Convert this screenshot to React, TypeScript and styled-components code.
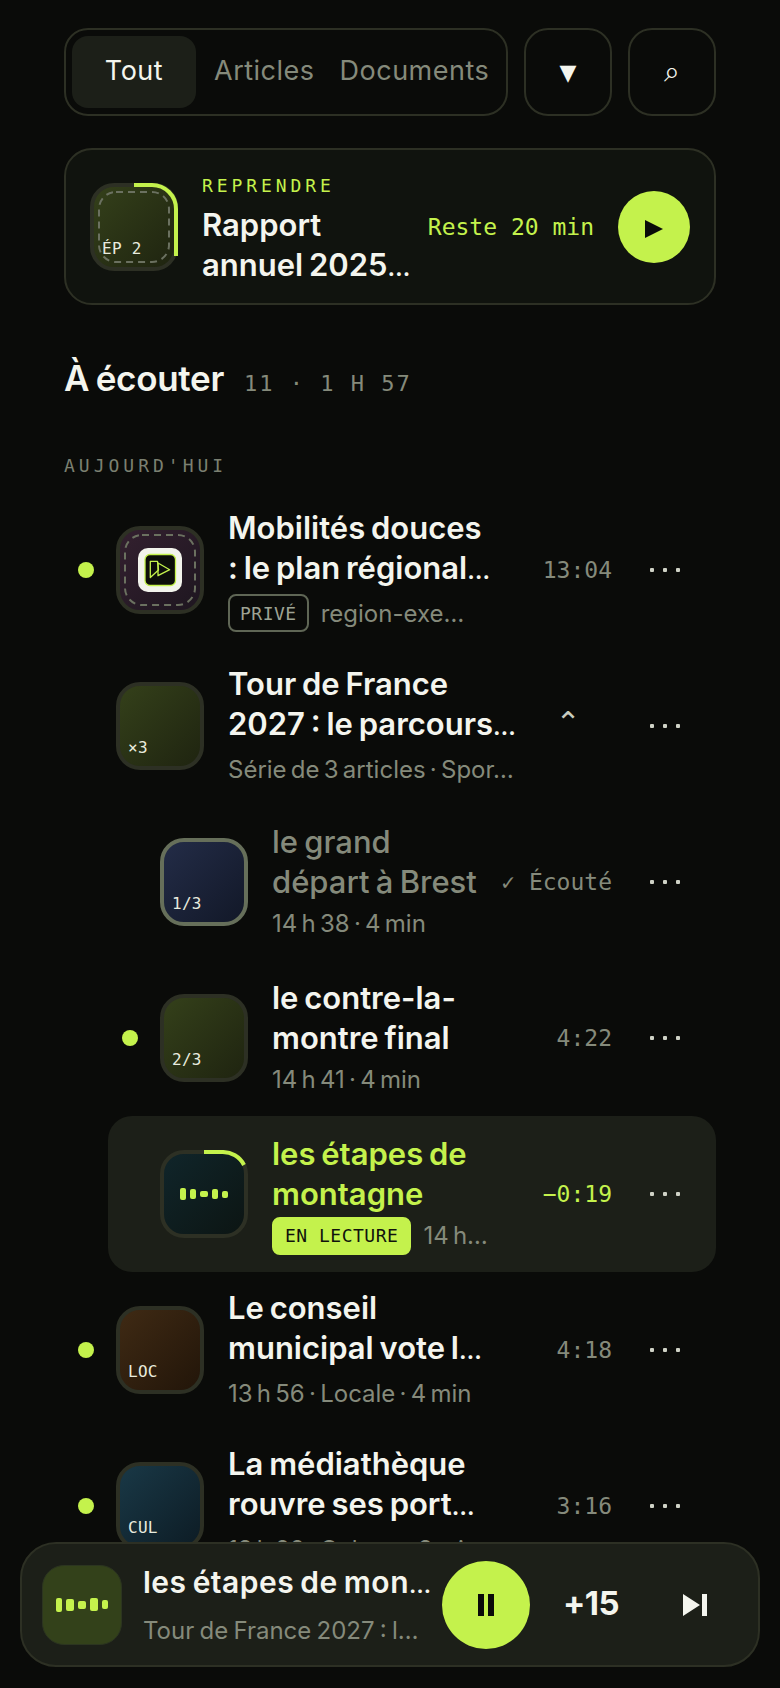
import React from "react";
import styled, { createGlobalStyle } from "styled-components";

const LIME = "#c4f24c";
const TEXT = "#f4f5ee";
const MUTED = "#858a7b";
const LINE = "#2d3024";
const SANS = `"Inter", "Liberation Sans", sans-serif`;
const MONO = `"DejaVu Sans Mono", "Liberation Mono", monospace`;

const Global = createGlobalStyle`
  html, body { margin: 0; padding: 0; background: #0a0b09; }
  body { font-family: ${SANS}; color: ${TEXT}; }
  * { box-sizing: border-box; }
`;

const Page = styled.div`
  width: 780px;
  height: 1688px;
  overflow: hidden;
  padding: 28px 64px 0;
`;
const TopBar = styled.div`
  display: flex;
  gap: 16px;
`;
const Tabs = styled.div`
  width: 444px;
  height: 88px;
  display: flex;
  align-items: stretch;
  gap: 1px;
  padding: 6px;
  border: 2px solid ${LINE};
  border-radius: 24px;
`;
const Tab = styled.div<{ $on?: boolean }>`
  flex: none;
  display: flex;
  align-items: center;
  justify-content: center;
  height: 72px;
  width: ${(p) => (p.$on ? "124px" : "auto")};
  padding: 0 12px 3px;
  margin-right: ${(p) => (p.$on ? 5 : 0)}px;
  border-radius: 16px;
  background: ${(p) => (p.$on ? "#1c1f18" : "transparent")};
  color: ${(p) => (p.$on ? TEXT : MUTED)};
  font-size: 27px;
  letter-spacing: 0.5px;
`;
const IconButton = styled.div<{ $big?: boolean }>`
  width: 88px;
  height: 88px;
  display: flex;
  align-items: center;
  justify-content: center;
  border: 2px solid ${LINE};
  border-radius: 24px;
  color: ${TEXT};
  font-family: "DejaVu Sans", sans-serif;
  font-size: ${(p) => (p.$big ? 28 : 22)}px;
`;
const Banner = styled.div`
  height: 157px;
  margin-top: 32px;
  display: flex;
  align-items: center;
  gap: 24px;
  padding: 0 24px;
  background: #10130e;
  border: 2px solid ${LINE};
  border-radius: 28px;
`;
const Thumb = styled.div<{ $from: string; $to: string; $edge?: string }>`
  position: relative;
  flex: none;
  width: 88px;
  height: 88px;
  display: flex;
  align-items: center;
  justify-content: center;
  border: 4px solid ${(p) => p.$edge || LINE};
  border-radius: 24px;
  background: linear-gradient(135deg, ${(p) => p.$from}, ${(p) => p.$to});
`;
const Overlay = styled.svg`
  position: absolute;
  left: -4px;
  top: -4px;
  width: 88px;
  height: 88px;
  fill: none;
`;
const ThumbLabel = styled.span`
  position: absolute;
  left: 8px;
  bottom: 9px;
  font-family: ${MONO};
  font-size: 16px;
  line-height: 18px;
  letter-spacing: 0.3px;
  color: #e9ecdf;
`;
const BannerText = styled.div`
  flex: 1;
  min-width: 0;
  padding-top: 10px;
`;
const Eyebrow = styled.div`
  font-family: ${MONO};
  font-size: 18px;
  line-height: 22px;
  letter-spacing: 3.9px;
  color: ${LIME};
  margin-bottom: 8px;
`;
const Title = styled.div<{ $tone?: "lime" | "muted" }>`
  font-size: 31px;
  font-weight: ${(p) => (p.$tone === "muted" ? 500 : 600)};
  line-height: 40px;
  word-spacing: -2px;
  white-space: nowrap;
  color: ${(p) => (p.$tone === "lime" ? LIME : p.$tone === "muted" ? MUTED : TEXT)};
`;
const TitleLine = styled.div`
  width: fit-content;
`;
const Ell = styled.span`
  font-size: 0.77em;
  letter-spacing: 0;
`;
const Remaining = styled.div`
  font-family: ${MONO};
  font-size: 23px;
  color: ${LIME};
  white-space: nowrap;
`;
const RoundButton = styled.div<{ $size: number }>`
  flex: none;
  width: ${(p) => p.$size}px;
  height: ${(p) => p.$size}px;
  border-radius: 50%;
  background: ${LIME};
  display: flex;
  align-items: center;
  justify-content: center;
`;
const PlayGlyph = styled.svg`
  width: 18px;
  height: 18px;
  margin-top: 5px;
  fill: #0a0b09;
`;
const Heading = styled.div`
  display: flex;
  align-items: baseline;
  gap: 20px;
  margin-top: 53px;
  height: 40px;
`;
const H1 = styled.h1`
  margin: 0;
  font-size: 35px;
  font-weight: 600;
  line-height: 40px;
  letter-spacing: -0.3px;
  word-spacing: -2px;
`;
const Count = styled.span`
  font-family: ${MONO};
  font-size: 22px;
  letter-spacing: 2px;
  color: ${MUTED};
`;
const Section = styled.div`
  margin-top: 57px;
  font-family: ${MONO};
  font-size: 18px;
  line-height: 22px;
  letter-spacing: 4px;
  color: #7b8071;
`;
const List = styled.div`
  margin-top: 15px;
`;
const RowBox = styled.div<{ $sub?: boolean; $active?: boolean }>`
  height: 156px;
  margin-left: ${(p) => (p.$sub ? 44 : 0)}px;
  padding: 0 15px 0 14px;
  display: flex;
  align-items: center;
  border-radius: 24px;
  background: ${(p) => (p.$active ? "#1c1f18" : "transparent")};
`;
const DotSlot = styled.div`
  flex: none;
  width: 16px;
  margin-right: 22px;
  display: flex;
`;
const Dot = styled.span`
  width: 16px;
  height: 16px;
  border-radius: 50%;
  background: ${LIME};
`;
const Body = styled.div`
  flex: 1;
  min-width: 0;
  margin-left: 24px;
  padding-top: 2px;
`;
const Meta = styled.div`
  display: flex;
  align-items: center;
  gap: 12px;
  height: 42px;
  margin-top: 1px;
  font-size: 24px;
  word-spacing: -2.5px;
  color: ${MUTED};
  white-space: nowrap;
`;
const Tag = styled.span<{ $solid?: boolean }>`
  height: 38px;
  display: flex;
  align-items: center;
  padding: 0 ${(p) => (p.$solid ? 11 : 10)}px;
  border-radius: 8px;
  font-family: ${MONO};
  font-size: 18px;
  letter-spacing: 0.5px;
  word-spacing: 0;
  border: 2px solid ${(p) => (p.$solid ? LIME : "#5f6655")};
  background: ${(p) => (p.$solid ? LIME : "transparent")};
  color: ${(p) => (p.$solid ? "#11130c" : "#9ea394")};
`;
const Trailing = styled.div<{ $tone?: "lime" }>`
  flex: none;
  font-family: ${MONO};
  font-size: 23px;
  color: ${(p) => (p.$tone === "lime" ? LIME : MUTED)};
  white-space: nowrap;
`;
const Chevron = styled.div`
  flex: none;
  width: 88px;
  text-align: center;
  font-family: "DejaVu Sans", sans-serif;
  font-size: 30px;
  line-height: 30px;
  margin-top: -6px;
  color: #c9ccbf;
`;
const More = styled.div`
  flex: none;
  width: 72px;
  margin-left: 17px;
  display: flex;
  justify-content: center;
  gap: 9px;
`;
const MoreDot = styled.span`
  width: 4px;
  height: 4px;
  background: #cfd2c6;
  border-radius: 1px;
`;
const Wave = styled.div`
  display: flex;
  align-items: center;
  gap: 4px;
`;
const Bar = styled.span<{ $w: number; $h: number }>`
  width: ${(p) => p.$w}px;
  height: ${(p) => p.$h}px;
  border-radius: 2px;
  background: ${LIME};
`;
const Player = styled.div`
  position: fixed;
  left: 20px;
  bottom: 21px;
  width: 740px;
  height: 125px;
  display: flex;
  align-items: center;
  padding: 0 20px;
  background: #1c1f18;
  border: 2px solid ${LINE};
  border-radius: 36px;
`;
const PlayerThumb = styled.div`
  flex: none;
  width: 80px;
  height: 80px;
  border: 1px solid #2c3520;
  border-radius: 22px;
  background: #33411a;
  display: flex;
  align-items: center;
  justify-content: center;
`;
const PlayerText = styled.div`
  width: 299px;
  margin-left: 21px;
  padding-top: 5px;
`;
const PlayerTitle = styled.div`
  font-size: 30px;
  font-weight: 600;
  line-height: 45px;
  letter-spacing: 0.5px;
  word-spacing: -2px;
  white-space: nowrap;
`;
const PlayerSub = styled.div`
  margin-top: -1px;
  font-size: 24px;
  line-height: 47px;
  word-spacing: -1.5px;
  color: ${MUTED};
  white-space: nowrap;
`;
const Jump = styled.div`
  width: 88px;
  margin: 0 0 4px 17px;
  text-align: center;
  font-size: 33px;
  font-weight: 700;
  letter-spacing: -0.5px;
`;
const Skip = styled.svg`
  margin-left: 47px;
  width: 26px;
  height: 26px;
  fill: ${TEXT};
`;
const IconTile = styled.svg`
  position: relative;
  width: 44px;
  height: 44px;
`;

const Trimmed = ({ text }: { text: string }) => {
  const cut = text.endsWith("…");
  return (
    <>
      {cut ? text.slice(0, -1) : text}
      {cut && <Ell>…</Ell>}
    </>
  );
};

const Lines = ({ text, tone }: { text: string; tone?: "lime" | "muted" }) => (
  <Title $tone={tone}>
    {text.split("\n").map((line) => (
      <TitleLine key={line}>
        <Trimmed text={line} />
      </TitleLine>
    ))}
  </Title>
);

type RowProps = {
  sub?: boolean;
  active?: boolean;
  dot?: boolean;
  thumb: React.ReactNode;
  title: string;
  tone?: "lime" | "muted";
  meta: React.ReactNode;
  trailing: React.ReactNode;
};

const Row = ({ sub, active, dot, thumb, title, tone, meta, trailing }: RowProps) => (
  <RowBox $sub={sub} $active={active}>
    <DotSlot>{dot && <Dot />}</DotSlot>
    {thumb}
    <Body>
      <Lines text={title} tone={tone} />
      <Meta>{meta}</Meta>
    </Body>
    {trailing}
    <More>
      <MoreDot />
      <MoreDot />
      <MoreDot />
    </More>
  </RowBox>
);

const bars = {
  small: [
    [6, 12],
    [6, 10],
    [8, 6],
    [6, 10],
    [6, 7],
  ],
  big: [
    [6, 14],
    [8, 12],
    [8, 8],
    [8, 13],
    [6, 9],
  ],
};

const Waves = ({ size }: { size: "small" | "big" }) => (
  <Wave>
    {bars[size].map(([w, h], i) => (
      <Bar key={i} $w={w} $h={h} />
    ))}
  </Wave>
);

const Dashes = () => (
  <Overlay viewBox="0 0 88 88">
    <rect x="9" y="9" width="70" height="70" rx="17" stroke="#6b7160" strokeWidth="2" strokeDasharray="7 5" />
  </Overlay>
);

const Ring = ({ d }: { d: string }) => (
  <Overlay viewBox="0 0 88 88">
    <path d={d} stroke={LIME} strokeWidth="4" />
  </Overlay>
);

const AppIcon = () => (
  <IconTile viewBox="0 0 44 44">
    <rect width="44" height="44" rx="10" fill="#f2f3ec" />
    <rect x="7" y="6.5" width="30.5" height="31" rx="5" fill="#0c0d0a" stroke={LIME} strokeWidth="1.3" />
    <g fill="none" stroke={LIME} strokeWidth="1.3" strokeLinejoin="round">
      <path d="M12.3 13.3H19.5L20.5 22L12.3 29.5Z" />
      <path d="M20 15L31.7 21.7L20 27.7Z" />
    </g>
  </IconTile>
);

export default function App() {
  return (
    <Page>
      <Global />
      <TopBar>
        <Tabs>
          <Tab $on>Tout</Tab>
          <Tab>Articles</Tab>
          <Tab>Documents</Tab>
        </Tabs>
        <IconButton>▼</IconButton>
        <IconButton $big>⌕</IconButton>
      </TopBar>

      <Banner>
        <Thumb $from="#34401a" $to="#1f2410">
          <Dashes />
          <ThumbLabel>ÉP 2</ThumbLabel>
          <Ring d="M44 2H62A24 24 0 0 1 86 26V73" />
        </Thumb>
        <BannerText>
          <Eyebrow>REPRENDRE</Eyebrow>
          <Lines text={"Rapport\nannuel 2025…"} />
        </BannerText>
        <Remaining>Reste 20 min</Remaining>
        <RoundButton $size={72}>
          <PlayGlyph viewBox="0 0 18 18">
            <path d="M0 0L18 9L0 18Z" />
          </PlayGlyph>
        </RoundButton>
      </Banner>

      <Heading>
        <H1>À écouter</H1>
        <Count>11 · 1 H 57</Count>
      </Heading>
      <Section>AUJOURD'HUI</Section>

      <List>
        <Row
          dot
          thumb={
            <Thumb $from="#33202f" $to="#1e1620">
              <Dashes />
              <AppIcon />
            </Thumb>
          }
          title={"Mobilités douces\n: le plan régional…"}
          meta={
            <>
              <Tag>PRIVÉ</Tag>
              region-exe…
            </>
          }
          trailing={<Trailing>13:04</Trailing>}
        />
        <Row
          thumb={
            <Thumb $from="#34401a" $to="#1f2410">
              <ThumbLabel>×3</ThumbLabel>
            </Thumb>
          }
          title={"Tour de France\n2027 : le parcours…"}
          meta="Série de 3 articles · Spor…"
          trailing={<Chevron>⌃</Chevron>}
        />
        <Row
          sub
          thumb={
            <Thumb $from="#232c47" $to="#121828" $edge="#666f5a">
              <ThumbLabel>1/3</ThumbLabel>
            </Thumb>
          }
          title={"le grand\ndépart à Brest"}
          tone="muted"
          meta="14 h 38 · 4 min"
          trailing={<Trailing>✓ Écouté</Trailing>}
        />
        <Row
          sub
          dot
          thumb={
            <Thumb $from="#34401a" $to="#1f2410">
              <ThumbLabel>2/3</ThumbLabel>
            </Thumb>
          }
          title={"le contre-la-\nmontre final"}
          meta="14 h 41 · 4 min"
          trailing={<Trailing>4:22</Trailing>}
        />
        <Row
          sub
          active
          thumb={
            <Thumb $from="#10252a" $to="#0c1513">
              <Waves size="small" />
              <Ring d="M44 2H62A24 24 0 0 1 84 15" />
            </Thumb>
          }
          title={"les étapes de\nmontagne"}
          tone="lime"
          meta={
            <>
              <Tag $solid>EN LECTURE</Tag>
              14 h…
            </>
          }
          trailing={<Trailing $tone="lime">−0:19</Trailing>}
        />
        <Row
          dot
          thumb={
            <Thumb $from="#3f2a14" $to="#221509">
              <ThumbLabel>LOC</ThumbLabel>
            </Thumb>
          }
          title={"Le conseil\nmunicipal vote l…"}
          meta="13 h 56 · Locale · 4 min"
          trailing={<Trailing>4:18</Trailing>}
        />
        <Row
          dot
          thumb={
            <Thumb $from="#193846" $to="#0d1c25">
              <ThumbLabel>CUL</ThumbLabel>
            </Thumb>
          }
          title={"La médiathèque\nrouvre ses port…"}
          meta="13 h 22 · Culture · 3 min"
          trailing={<Trailing>3:16</Trailing>}
        />
      </List>

      <Player>
        <PlayerThumb>
          <Waves size="big" />
        </PlayerThumb>
        <PlayerText>
          <PlayerTitle>
            <Trimmed text="les étapes de mon…" />
          </PlayerTitle>
          <PlayerSub>Tour de France 2027 : l…</PlayerSub>
        </PlayerText>
        <RoundButton $size={88}>
          <svg width="20" height="24" viewBox="0 0 20 24">
            <path d="M2 1H8V23H2ZM12 1H18V23H12Z" fill="#0a0b09" />
          </svg>
        </RoundButton>
        <Jump>+15</Jump>
        <Skip viewBox="0 0 26 26">
          <path d="M1 2L18 13L1 24ZM20 2H25V24H20Z" />
        </Skip>
      </Player>
    </Page>
  );
}
